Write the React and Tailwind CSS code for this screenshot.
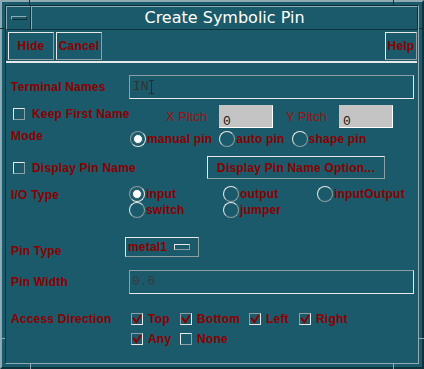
const raised = 'border border-t-[#e8e8e8] border-l-[#e8e8e8] border-r-[#8e9ea2] border-b-[#8e9ea2]';
const sunken = 'border border-t-[#8e9ea2] border-l-[#8e9ea2] border-r-[#e8e8e8] border-b-[#e8e8e8]';
const frameUp = 'border border-t-[#8faab2] border-l-[#8faab2] border-r-[#0c333c] border-b-[#0c333c]';
const lbl = 'font-bold text-[12px] leading-[14px] tracking-[0.2px] text-[#8b0000] whitespace-nowrap';
const mono = "font-['Liberation_Mono',monospace] text-[13px] leading-[14px]";

function Radio({ on, text }) {
  return (
    <div className="flex items-center h-[16px]">
      <span className={`w-[16px] h-[16px] shrink-0 rounded-full flex items-center justify-center ${on ? sunken : raised}`}>
        {on && <span className="w-[10px] h-[10px] rounded-full bg-white border border-[#2a5e6a]" />}
      </span>
      <span className={`ml-[1px] ${lbl}`}>{text}</span>
    </div>
  );
}

function Check({ on }) {
  return (
    <span className={`w-[12px] h-[12px] shrink-0 flex items-center justify-center ${on ? sunken : raised}`}>
      {on && (
        <svg width="10" height="10" viewBox="0 0 10 10">
          <path d="M1.2 3.6 L4.3 8.2 L8.8 1.2" fill="none" stroke="#8b0000" strokeWidth="2" />
        </svg>
      )}
    </span>
  );
}

function CheckItem({ on, text }) {
  return (
    <div className="flex items-center h-[12px]">
      <Check on={on} />
      <span className={`ml-[5px] ${lbl}`}>{text}</span>
    </div>
  );
}

export default function App() {
  return (
    <div className="relative w-[424px] h-[369px] bg-[#1b5a6a] border-2 border-t-[#8faab2] border-l-[#8faab2] border-r-[#0c333c] border-b-[#0c333c] p-[3px] font-['Liberation_Sans',Arial,sans-serif]">
      {/* resize handle notches */}
      <div className="absolute top-[-2px] left-[27px] w-[1px] h-[5px] bg-[#0c333c]" />
      <div className="absolute top-[-2px] left-[391px] w-[1px] h-[5px] bg-[#0c333c]" />
      <div className="absolute bottom-[-2px] left-[28px] w-[1px] h-[5px] bg-[#8faab2]" />
      <div className="absolute bottom-[-2px] left-[391px] w-[1px] h-[5px] bg-[#8faab2]" />
      <div className="absolute left-[-2px] top-[26px] w-[5px] h-[1px] bg-[#0c333c]" />
      <div className="absolute left-[-2px] top-[336px] w-[5px] h-[1px] bg-[#8faab2]" />
      <div className="absolute right-[-2px] top-[26px] w-[5px] h-[1px] bg-[#0c333c]" />
      <div className="absolute right-[-2px] top-[336px] w-[5px] h-[1px] bg-[#8faab2]" />

      <div className="h-full border border-t-[#0c333c] border-l-[#0c333c] border-r-[#8faab2] border-b-[#8faab2] flex flex-col">
        {/* title bar */}
        <div className="flex h-[24px] shrink-0">
          <div className={`w-[25px] flex items-center justify-center ${frameUp}`}>
            <span className={`w-[16px] h-[4px] ${frameUp}`} />
          </div>
          <div className={`flex-1 flex items-center justify-center text-white font-['DejaVu_Sans',sans-serif] text-[16px] ${frameUp}`}>
            Create Symbolic Pin
          </div>
        </div>

        {/* buttons */}
        <div className="flex pt-[2px] pl-[2px] pr-[1px] h-[30px] shrink-0">
          <button className={`w-[46px] h-[28px] ${raised} ${lbl}`}>Hide</button>
          <button className={`w-[46px] h-[28px] ml-[2px] ${raised} ${lbl}`}>Cancel</button>
          <button className={`w-[32px] h-[28px] ml-auto ${raised} ${lbl}`}>Help</button>
        </div>
        <div className="mt-[1px] mr-[1px] h-[2px] bg-[#e4e8e8] shrink-0" />

        {/* Terminal Names */}
        <div className="flex items-center mt-[12px] h-[24px]">
          <div className={`w-[123px] pl-[5px] ${lbl}`}>Terminal Names</div>
          <div className={`w-[285px] h-[24px] flex items-center pl-[3px] ${sunken}`}>
            <span className={`${mono} text-[#333]`}>IN</span>
            <svg width="5" height="14" viewBox="0 0 5 14">
              <path d="M0 0.5 H5 M2.5 0.5 V13.5 M0 13.5 H5" stroke="#2a2a2a" strokeWidth="1" fill="none" />
            </svg>
          </div>
        </div>

        {/* Keep First Name / pitch */}
        <div className="flex items-start mt-[6px] h-[23px]">
          <div className="w-[160px] pl-[7px] pt-[2px] flex items-center">
            <Check on={false} />
            <span className={`ml-[7px] ${lbl}`}>Keep First Name</span>
          </div>
          <div className="w-[53px] self-center text-[13px] leading-[14px] text-[#a01010]">X Pitch</div>
          <div className="w-[54px] h-[23px] bg-[#c4c4c4] border border-[#c4c4c4] border-r-white border-b-white pl-[3px] pt-[2px]">
            <span className={`${mono} text-[#222]`}>0</span>
          </div>
          <div className="w-[53px] ml-[13px] self-center text-[13px] leading-[14px] text-[#a01010]">Y Pitch</div>
          <div className="w-[54px] h-[23px] bg-[#c4c4c4] border border-[#c4c4c4] border-r-white border-b-white pl-[3px] pt-[2px]">
            <span className={`${mono} text-[#222]`}>0</span>
          </div>
        </div>

        {/* Mode */}
        <div className="flex items-start mt-[3px] h-[16px]">
          <div className={`w-[124px] pl-[5px] mt-[-2px] ${lbl}`}>Mode</div>
          <div className="flex gap-[7px]">
            <Radio on text="manual pin" />
            <Radio text="auto pin" />
            <Radio text="shape pin" />
          </div>
        </div>

        {/* Display Pin Name */}
        <div className="flex items-center mt-[9px] h-[23px]">
          <div className="w-[201px] pl-[7px] flex items-center">
            <Check on={false} />
            <span className={`ml-[7px] ${lbl}`}>Display Pin Name</span>
          </div>
          <button className={`w-[178px] h-[23px] ${raised} ${lbl}`}>Display Pin Name Option...</button>
        </div>

        {/* I/O Type */}
        <div className="flex items-start mt-[7px] h-[32px]">
          <div className={`w-[123px] pl-[5px] mt-[2px] ${lbl}`}>I/O Type</div>
          <div className="grid grid-cols-[94px_94px_auto]">
            <Radio on text="input" />
            <Radio text="output" />
            <Radio text="inputOutput" />
            <Radio text="switch" />
            <Radio text="jumper" />
          </div>
        </div>

        {/* Pin Type */}
        <div className="flex items-start mt-[19px] h-[20px]">
          <div className={`w-[119px] pl-[5px] mt-[7px] ${lbl}`}>Pin Type</div>
          <div className={`w-[74px] h-[20px] flex items-center justify-between pl-[2px] pr-[8px] ${raised}`}>
            <span className={lbl}>metal1</span>
            <span className={`w-[16px] h-[6px] ${raised}`} />
          </div>
        </div>

        {/* Pin Width */}
        <div className="flex items-center mt-[13px] h-[24px]">
          <div className={`w-[123px] pl-[5px] ${lbl}`}>Pin Width</div>
          <div className={`w-[285px] h-[24px] flex items-center pl-[2px] ${sunken}`}>
            <span className={`${mono} text-[#3a3a3a]`}>0.6</span>
          </div>
        </div>

        {/* Access Direction */}
        <div className="flex items-start mt-[19px]">
          <div className={`w-[125px] pl-[5px] mt-[-1px] ${lbl}`}>Access Direction</div>
          <div className="grid grid-cols-[49px_69px_50px_auto] gap-y-[8px]">
            <CheckItem on text="Top" />
            <CheckItem on text="Bottom" />
            <CheckItem on text="Left" />
            <CheckItem on text="Right" />
            <CheckItem on text="Any" />
            <CheckItem on={false} text="None" />
          </div>
        </div>
      </div>
    </div>
  );
}
